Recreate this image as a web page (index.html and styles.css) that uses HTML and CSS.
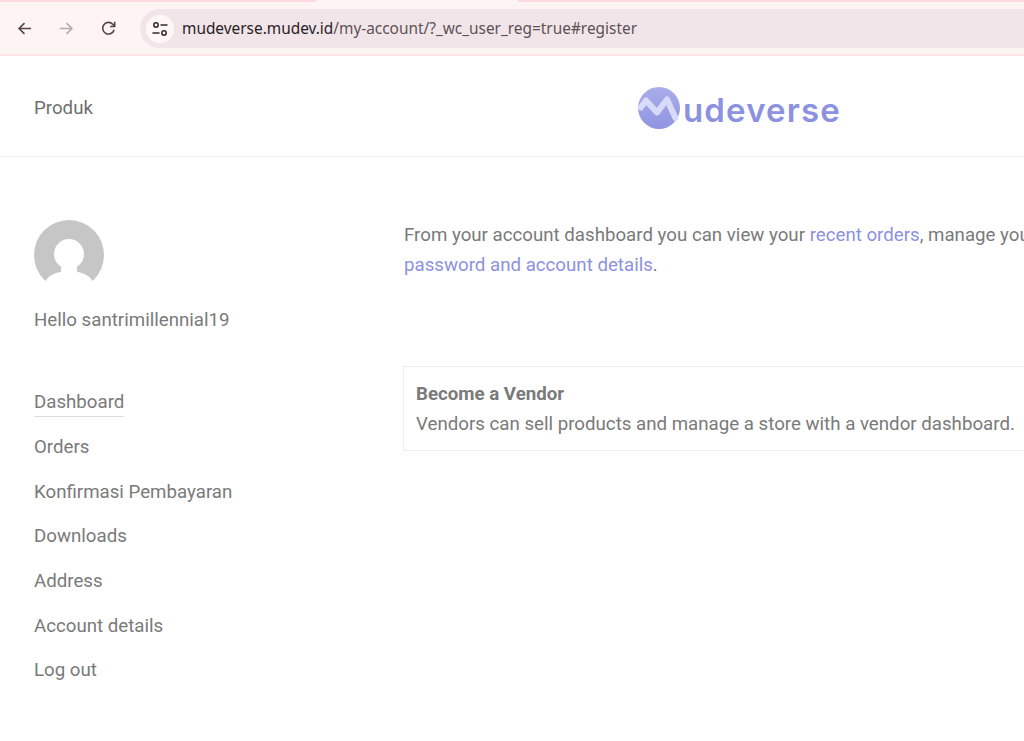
FILE: index.html
```html
<!DOCTYPE html>
<html lang="en">
<head>
<meta charset="utf-8">
<title>My account – Mudeverse</title>
<link rel="stylesheet" href="styles.css">
</head>
<body>
<div class="tabstrip">
  <div class="strip strip-left"></div>
  <div class="strip strip-right"></div>
</div>
<div class="toolbar">
  <svg class="nav-icon" viewBox="0 0 16 16"><path d="M15 8H2M8 2.200 2.200 8 8 13.800" fill="none" stroke="#554548" stroke-width="1.7"/></svg>
  <svg class="nav-icon" viewBox="0 0 16 16"><path d="M1 8h13M8 2.200 13.800 8 8 13.800" fill="none" stroke="#b5a9ab" stroke-width="1.700"/></svg>
  <svg class="nav-icon" viewBox="0 0 16 16"><path d="M14 9.400A6.200 6.200 0 1 1 12.600 3.500L14.200 5.300M14.600 .8v5H9.600" fill="none" stroke="#554548" stroke-width="1.7"/></svg>
  <div class="omnibox">
    <span class="site-chip">
      <svg class="tune" viewBox="0 0 18 18"><circle cx="5" cy="5" r="2.200" fill="none" stroke="#2f2a2b" stroke-width="1.500"/><path d="M9.500 5h7M1.500 13h7" stroke="#2f2a2b" stroke-width="1.500"/><circle cx="13" cy="13" r="2.200" fill="none" stroke="#2f2a2b" stroke-width="1.500"/></svg>
    </span>
    <span class="url"><span class="host">mudeverse.mudev.id</span>/my-account/?_wc_user_reg=true#register</span>
  </div>
</div>
<header class="site-header">
  <a class="menu-link">Produk</a>
  <div class="logo">
    <svg class="logo-mark" viewBox="0 0 42 42">
      <defs><linearGradient id="disc" x1="0" y1="0" x2="0" y2="1"><stop offset="0" stop-color="#a9ade9"/><stop offset="1" stop-color="#8f95e2"/></linearGradient></defs>
      <circle cx="21" cy="21" r="21" fill="url(#disc)"/>
      <path d="M2.800 20.500L8 13.500L19 25.500L29 12.500L37.500 31" fill="none" stroke="#d8dafa" stroke-width="6" stroke-linecap="round" stroke-linejoin="round"/>
    </svg>
    <span class="logo-text">udeverse</span>
  </div>
</header>
<main class="account">
  <aside class="sidebar">
    <svg class="avatar" viewBox="0 0 70 70">
      <circle cx="35" cy="35" r="35" fill="#c6c6c6"/>
      <path d="M11 62C14 56 20 53 26 52L44 52C50 53 56 56 59 62L59 72L11 72Z" fill="#fff"/>
      <circle cx="35" cy="34" r="15" fill="#fff"/>
      <rect x="27" y="44" width="16" height="10" fill="#fff"/>
      <rect x="0" y="70" width="70" height="1" fill="#fff"/>
    </svg>
    <p class="hello">Hello santrimillennial19</p>
    <nav class="account-nav">
      <a class="nav-item"><span class="current">Dashboard</span></a>
      <a class="nav-item">Orders</a>
      <a class="nav-item">Konfirmasi Pembayaran</a>
      <a class="nav-item">Downloads</a>
      <a class="nav-item">Address</a>
      <a class="nav-item">Account details</a>
      <a class="nav-item">Log out</a>
    </nav>
  </aside>
  <section class="content">
    <p class="intro">From your account dashboard you can view your <a class="link">recent orders</a>, manage your shipping and billing addresses, and edit your<br><a class="link">password and account details</a>.</p>
    <div class="vendor-box">
      <strong class="vendor-title">Become a Vendor</strong>
      <span class="vendor-text">Vendors can sell products and manage a store with a vendor dashboard.</span>
    </div>
  </section>
</main>
</body>
</html>
```
FILE: styles.css
```css
* { box-sizing: border-box; }
html, body { margin: 0; height: 741px; overflow: hidden; background: #fff; }
body { font-family: Roboto, "Liberation Sans", sans-serif; font-size: 18.700px; color: #7a7a7a; width: 1024px; }

.tabstrip { height: 2px; background: #fff4f4; display: flex; justify-content: space-between; }
.strip { height: 2px; background: #ffd8e0; }
.strip-left { width: 316px; }
.strip-right { width: 506px; }

.toolbar { height: 54px; background: #fff4f4; border-bottom: 2px solid #fde3e6; display: flex; align-items: center; padding: 0 0 0 17px; }
.nav-icon { width: 15px; height: 15px; margin-right: 27px; flex: none; }
.omnibox { flex: 1; height: 39px; margin: 1px 0 0 -3px; border-radius: 20px 0 0 20px; background: #f2e5ea; display: flex; align-items: center; padding-left: 6px; }
.site-chip { width: 28px; height: 28px; border-radius: 50%; background: #fff6f6; display: flex; align-items: center; justify-content: center; }
.tune { width: 18px; height: 18px; }
.url { margin-left: 8px; font-family: "Noto Sans", "Open Sans", sans-serif; font-size: 15.400px; color: #5c5254; white-space: nowrap; }
.host { color: #262224; }

.site-header { height: 101px; border-bottom: 1px solid #eee; position: relative; display: flex; align-items: center; padding-left: 34px; padding-top: 4px; }
.menu-link { color: #6f6f6f; }
.logo { position: absolute; left: 638px; top: 30px; display: flex; align-items: flex-start; }
.logo-mark { width: 42px; height: 42px; flex: none; margin-top: 1px; }
.logo-text { font-family: Inter, "Open Sans", sans-serif; font-weight: 600; font-size: 33px; line-height: 42px; color: #8c92e0; margin: 3px 0 0 3px; letter-spacing: 1.150px; }

.account { display: flex; padding: 63px 0 0 34px; }
.sidebar { width: 370px; flex: none; }
.avatar { display: block; width: 70px; height: 70px; }
.hello { margin: 15px 0 0; line-height: 30px; }
.account-nav { display: flex; flex-direction: column; margin-top: 52.300px; }
.nav-item { height: 44.650px; line-height: 30px; }
.current { display: inline-block; height: 30px; border-bottom: 1px solid #ddd; }

.content { width: 1000px; flex: none; }
.intro { margin: 0; line-height: 30px; white-space: nowrap; }
.link { color: #8c92e0; }
.vendor-box { margin: 86px 0 0 -1px; width: 800px; height: 85px; border: 1px solid #eee; padding: 12px; display: flex; flex-direction: column; }
.vendor-title { line-height: 30px; font-weight: 700; }
.vendor-text { line-height: 30px; white-space: nowrap; }
```
